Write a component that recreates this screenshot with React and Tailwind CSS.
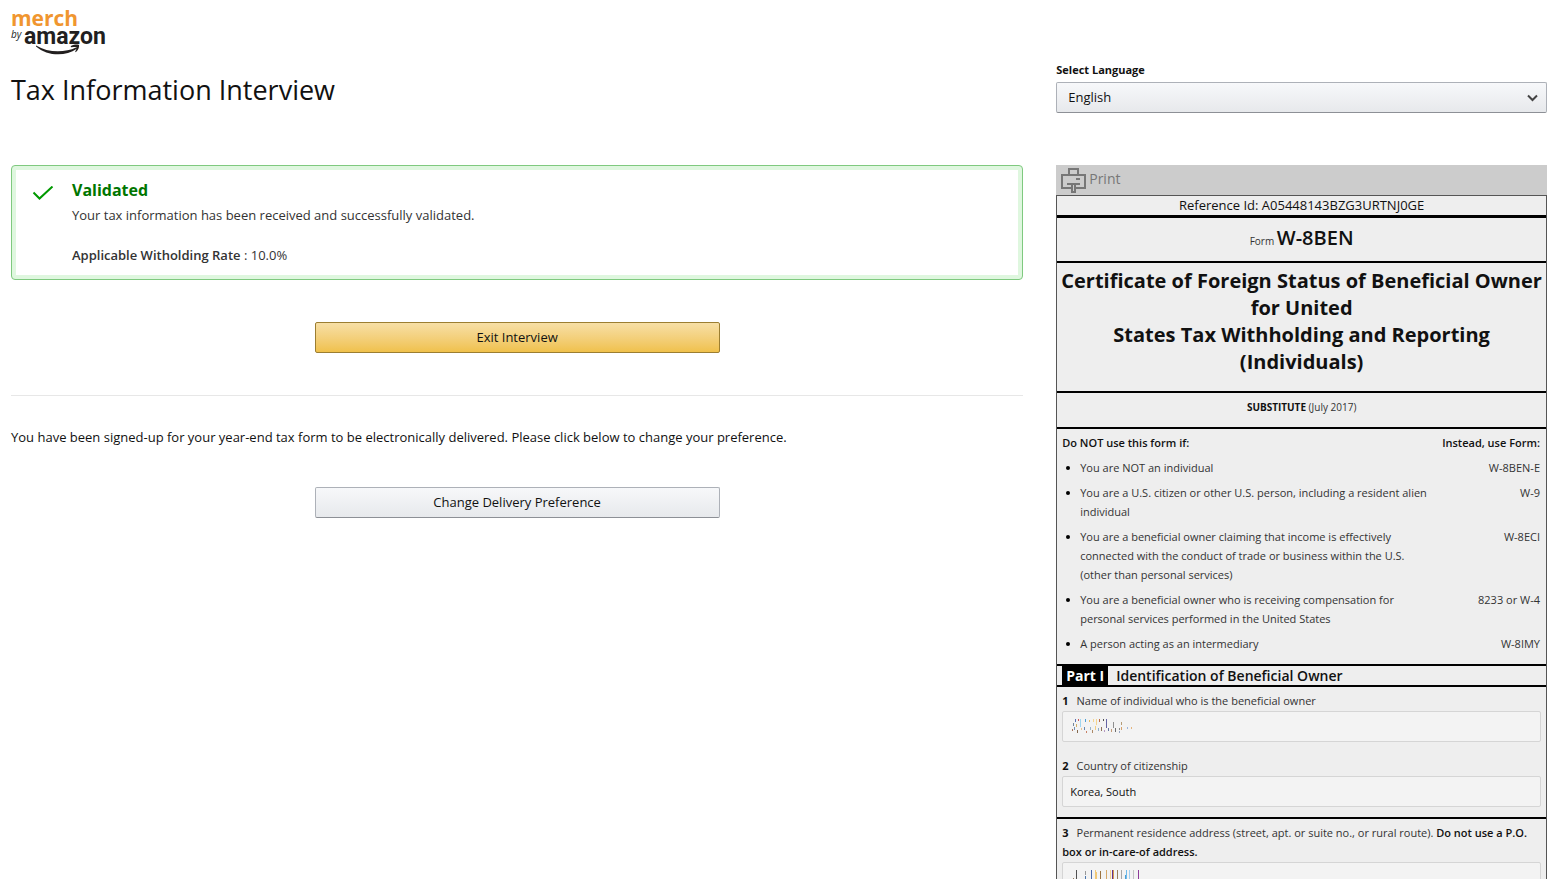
import React from 'react'

const exclusions = [
  { text: 'You are NOT an individual', form: 'W-8BEN-E' },
  { text: 'You are a U.S. citizen or other U.S. person, including a resident alien individual', form: 'W-9' },
  { text: 'You are a beneficial owner claiming that income is effectively connected with the conduct of trade or business within the U.S. (other than personal services)', form: 'W-8ECI' },
  { text: 'You are a beneficial owner who is receiving compensation for personal services performed in the United States', form: '8233 or W-4' },
  { text: 'A person acting as an intermediary', form: 'W-8IMY' },
]

// [x, y, height, color]
const nameMarks = [
  [3, 0, 3, '#3a5ba8'], [6, 0, 2, '#c43b3b'], [8, 0, 8, '#8fd0ee'], [13, 0, 3, '#2f8fd0'], [17, 1, 2, '#e2b04a'],
  [21, 0, 3, '#f4cf7e'], [24, 0, 6, '#f4cf7e'], [27, 0, 3, '#b5562c'], [31, 0, 2, '#333'], [34, 0, 9, '#4a4a96'],
  [1, 4, 3, '#59718c'], [4, 5, 3, '#c9a04e'], [0, 10, 2, '#9b5a3c'], [2, 8, 3, '#5c7fa8'], [5, 11, 3, '#705030'],
  [9, 9, 2, '#e6b877'], [12, 8, 3, '#4f77a6'], [14, 12, 2, '#c06a4a'], [18, 8, 3, '#8aa8c0'], [20, 11, 3, '#a0764c'],
  [23, 7, 4, '#f0c870'], [26, 9, 3, '#7ea0c0'], [29, 8, 4, '#7a5a40'], [32, 11, 2, '#aa88bb'], [36, 9, 3, '#4c5c90'],
  [39, 10, 3, '#b88860'], [41, 3, 6, '#7d7d7d'], [43, 9, 4, '#555'], [47, 12, 2, '#8899bb'], [49, 3, 3, '#a98c60'],
  [49, 8, 3, '#d09050'], [47, 9, 2, '#777'], [55, 8, 2, '#8aa8d8'], [59, 8, 2, '#e0a868'],
]
const streetMarks = [
  [4, 0, 9, '#333'], [1, 8, 3, '#8a6a4a'], [8, 9, 2, '#a88'], [13, 1, 4, '#888'], [13, 6, 3, '#2b5fa0'],
  [19, 0, 9, '#2b4f9a'], [23, 0, 9, '#f0c060'], [24, 2, 7, '#f0c060'], [28, 1, 10, '#8a5a20'], [34, 0, 10, '#d09a50'],
  [38, 0, 9, '#f4c880'], [40, 0, 9, '#4b1070'], [41, 0, 9, '#d08a30'], [45, 0, 9, '#8a6a40'], [49, 0, 9, '#999'],
  [53, 5, 5, '#2b8fd0'], [54, 0, 9, '#58b0e8'], [57, 0, 9, '#90c8f0'], [61, 0, 9, '#bbb'], [66, 0, 9, '#7a1a8a'],
  [3, 10, 2, '#a07040'], [6, 10, 3, '#6a5a50'], [10, 11, 2, '#c09060'], [16, 10, 3, '#7a6a80'], [21, 11, 2, '#886'],
]

function Scribble({ marks }) {
  return (
    <svg className="pointer-events-none absolute left-2 top-2" width="72" height="16" shapeRendering="crispEdges" aria-hidden="true">
      {marks.map(([x, y, h, c], i) => (
        <rect key={i} x={x + 2} y={y} width="1" height={h} fill={c} opacity="0.85" />
      ))}
    </svg>
  )
}

function Logo() {
  return (
    <svg className="overflow-visible" width="98" height="48" viewBox="0 0 98 48" role="img" aria-label="merch by amazon">
      <text x="0" y="17" fontSize="21" fontWeight="700" fill="#f0962f" fontFamily="'Open Sans', sans-serif">merch</text>
      <text x="0" y="29" fontSize="10" fontStyle="italic" fill="#221f1f" fontFamily="'Open Sans', sans-serif">by</text>
      <text x="13" y="35" fontSize="23" fontWeight="700" fill="#221f1f" fontFamily="Roboto, sans-serif">amazon</text>
      <path d="M25 36.500 C37 44 54 43.800 65 38.500 C66 38 66.600 39.200 65.800 39.800 C54 48 36 47 25 37.400 Z" fill="#221f1f" />
      <path d="M60 37 C63 35.300 67.400 35.200 68 36 C68.500 37.300 67.500 41 65 43 C64.400 43.400 64 43 64.300 42.500 C65.300 40.500 66 38.800 65.500 38.300 C65 37.800 62.500 38 60.500 38.200 C59.800 38.200 59.500 37.400 60 37 Z" fill="#221f1f" />
    </svg>
  )
}

function PrinterIcon() {
  return (
    <svg width="25" height="25" viewBox="0 0 25 25" fill="none" stroke="#777" strokeWidth="2" aria-hidden="true">
      <path d="M8 7 V1 H17 V7" />
      <path d="M10 20 H1 V7 H24 V20 H15" />
      <path d="M6 16 H19" />
      <path d="M11 16 V24 H14 V16" />
      <path d="M15 11 H19" />
    </svg>
  )
}

function Field({ id, number, label, value, marks, children }) {
  return (
    <div className="px-[5px]">
      <label htmlFor={id} className="mb-px block">
        <b className="mr-2 text-[#111]">{number}</b>
        {label}
        {children}
      </label>
      <div className="relative">
        <input
          id={id}
          readOnly
          defaultValue={value}
          className="block h-[31px] w-full rounded-xs border border-[#d5d5d5] bg-[#f3f3f3] px-[7px] text-[#111]"
        />
        {marks && <Scribble marks={marks} />}
      </div>
    </div>
  )
}

function TaxForm() {
  return (
    <aside className="text-[11px] leading-[19px] text-[#333]">
      <button type="button" className="flex h-[30px] w-full items-center gap-[3px] bg-[#ccc] pl-[5px] text-sm text-[#777]">
        <PrinterIcon />
        <span className="pb-0.5">Print</span>
      </button>
      <div className="border border-[#555] bg-[#eee]">
        <p className="border-b-3 border-black text-center text-[13px] text-[#111]">Reference Id: A05448143BZG3URTNJ0GE</p>
        <p className="border-b-2 border-black pt-[7px] pb-[10px] text-center text-[10px]">
          Form <b className="text-xl leading-[26px] font-semibold text-[#111]">W-8BEN</b>
        </p>
        <h2 className="border-b-2 border-black pt-1 pb-4 text-center text-xl leading-[27px] font-bold text-[#111]">
          Certificate of Foreign Status of Beneficial Owner for United
          <br />
          States Tax Withholding and Reporting (Individuals)
        </h2>
        <p className="border-b-2 border-black pt-[5px] pb-[10px] text-center text-[10px]">
          <b className="text-[#111]">SUBSTITUTE</b> (July 2017)
        </p>
        <table className="mt-1 mb-[11px] w-full">
          <thead>
            <tr className="text-[#111]">
              <th className="w-[77%] pl-[5px] text-left font-semibold">Do NOT use this form if:</th>
              <th className="pr-[6px] text-right font-semibold">Instead, use Form:</th>
            </tr>
          </thead>
          <tbody>
            {exclusions.map((row) => (
              <tr key={row.form} className="align-top">
                <td className="flex gap-[10px] pt-[6px] pl-[9px]">
                  <span className="mt-2 size-1 shrink-0 rounded-full bg-black" />
                  {row.text}
                </td>
                <td className="pt-[6px] pr-[6px] text-right">{row.form}</td>
              </tr>
            ))}
          </tbody>
        </table>
        <h3 className="flex gap-2 border-y-2 border-black px-[5px] text-sm leading-[19px] font-semibold text-[#111]">
          <span className="bg-black px-1 font-bold text-white">Part I</span>
          Identification of Beneficial Owner
        </h3>
        <div className="flex flex-col gap-[14px] border-b-2 border-black pt-1 pb-[10px]">
          <Field id="owner-name" number="1" label="Name of individual who is the beneficial owner" marks={nameMarks} />
          <Field id="citizenship" number="2" label="Country of citizenship" value="Korea, South" />
        </div>
        <div className="pt-1 pb-[10px]">
          <Field id="address" number="3" label="Permanent residence address (street, apt. or suite no., or rural route). " marks={streetMarks}>
            <b className="font-semibold text-[#111]">Do not use a P.O. box or in-care-of address.</b>
          </Field>
        </div>
      </div>
    </aside>
  )
}

export default function App() {
  return (
    <div className="h-screen overflow-hidden bg-white pr-[17px] pl-[11px] font-['Open_Sans',sans-serif] text-[13px] leading-5 text-[#111]">
      <header className="grid grid-cols-[66fr_32fr] items-end gap-[33px] pt-[9px] pb-[52px]">
        <div>
          <Logo />
          <h1 className="mt-[15px] mb-[5px] text-[27px] leading-9">Tax Information Interview</h1>
        </div>
        <div>
          <label htmlFor="language" className="mb-[2px] block text-[11px] font-bold">Select Language</label>
          <div className="relative">
            <select
              id="language"
              className="block h-[31px] w-full appearance-none rounded-xs border border-[#adb1b8] border-b-[#8d9096] bg-linear-to-b from-[#f7f8fa] to-[#e7e9ec] px-[11px] pb-0.5"
            >
              <option>English</option>
            </select>
            <svg className="pointer-events-none absolute top-3 right-[9px]" width="11" height="8" fill="none" stroke="#444" strokeWidth="2" aria-hidden="true">
              <path d="M1 1.500 L5.500 6 L10 1.500" />
            </svg>
          </div>
        </div>
      </header>

      <div className="grid grid-cols-[66fr_32fr] items-start gap-[33px]">
        <main>
          <section className="rounded-sm border border-[#7fc97f] bg-[#dff7df] p-1">
            <div className="flex gap-[18px] bg-white px-4 pt-2 pb-[10px]">
              <svg className="mt-2" width="22" height="16" fill="none" stroke="#090" strokeWidth="2" aria-hidden="true">
                <path d="M1.500 6.500 L7.500 12.500 L20.500 0.500" />
              </svg>
              <div className="text-[#333]">
                <h2 className="text-base leading-6 font-bold text-[#007600]">Validated</h2>
                <p className="mt-[3px]">Your tax information has been received and successfully validated.</p>
                <p className="mt-5">
                  <b className="font-semibold">Applicable Witholding Rate</b> : 10.0%
                </p>
              </div>
            </div>
          </section>

          <button type="button" className="mx-auto mt-[42px] block h-[31px] w-2/5 rounded-xs border border-[#9c7e31] bg-linear-to-b from-[#f7dfa5] to-[#f0c14b] pb-0.5">
            Exit Interview
          </button>
          <hr className="mt-[42px] mb-[31px] border-[#e7e7e7]" />
          <p>You have been signed-up for your year-end tax form to be electronically delivered. Please click below to change your preference.</p>
          <button type="button" className="mx-auto mt-10 block h-[31px] w-2/5 rounded-xs border border-[#adb1b8] border-b-[#8d9096] bg-linear-to-b from-[#f7f8fa] to-[#e7e9ec] pb-0.5">
            Change Delivery Preference
          </button>
        </main>
        <TaxForm />
      </div>
    </div>
  )
}
